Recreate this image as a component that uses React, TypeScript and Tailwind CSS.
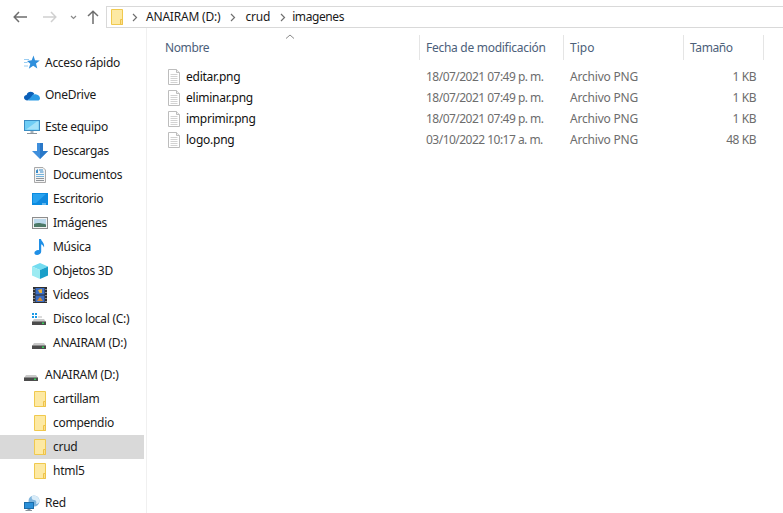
import React from "react";

const FolderIcon = () => (
  <svg width="14" height="18" viewBox="0 0 14 18" className="shrink-0">
    <path d="M1.5 1.5H12.5V16.5H1.5Z" fill="#fde9a3" stroke="#f0c94e" />
    <path d="M10.5 11.5H12.5V16.5H10.5Z" fill="#fbe08a" stroke="#eec24a" />
  </svg>
);

const FileIcon = () => (
  <svg width="14" height="16" viewBox="0 0 14 16" className="shrink-0">
    <path d="M1.5 .5H9.5L12.5 3.5V15.5H1.5Z" fill="#fff" stroke="#bdbdbd" />
    <path d="M9.5 .5V3.5H12.5" fill="#eee" stroke="#bdbdbd" />
    <path d="M3.5 5.5H10.5M3.5 7.5H10.5M3.5 9.5H10.5M3.5 11.5H10.5M3.5 13.5H10.5" stroke="#d2d2d2" />
  </svg>
);

const StarIcon = () => (
  <svg width="16" height="16" viewBox="0 0 16 16">
    <path d="M9.5 .5 11 5.2 15.8 5.4 12 8.4 13.3 13.5 9.2 10.7 4.8 13.8 6.3 8.8 3 6 7.7 5.3Z" fill="#2f8fdc" />
    <path d="M0 4.5H5M0 7.5H3.5M0 11H4" stroke="#9acdf2" />
  </svg>
);

const CloudIcon = () => (
  <svg width="16" height="16" viewBox="0 0 16 16">
    <path d="M3.5 13.5C1.3 13.5 0 12.2 0 10.6 0 9 1.2 8 2.6 7.9 3.1 5.9 4.8 4.7 6.7 4.7 8.3 4.7 9.6 5.5 10.3 6.8L7 11Z" fill="#0a5fb8" />
    <path d="M4 13.5 7.4 9.4C8.4 7.7 10 6.9 11.6 7.3 13.9 7.5 16 9 16 11.2 16 12.6 15 13.5 13.5 13.5Z" fill="#2a9be6" />
  </svg>
);

const PcIcon = () => (
  <svg width="16" height="16" viewBox="0 0 16 16">
    <rect x=".5" y="1.5" width="15" height="10" fill="#6ecdf5" stroke="#3b8ec4" />
    <path d="M2 10.5 13 2.5H14.5V10.5Z" fill="#a3e2f9" />
    <path d="M6.5 12H9.5V14H6.5Z" fill="#a8b2ba" />
    <path d="M3 14.5H13" stroke="#8a949c" />
  </svg>
);

const DownloadIcon = () => (
  <svg width="16" height="16" viewBox="0 0 16 16">
    <path d="M5 0H11V8H16L8 16 0 8H5Z" fill="#3f8fdc" />
    <path d="M8 0H11V8H16L8 16Z" fill="#2a78c8" />
  </svg>
);

const DocsIcon = () => (
  <svg width="16" height="16" viewBox="0 0 16 16">
    <path d="M2.5 .5H11L13.5 3V15.5H2.5Z" fill="#f4f4f4" stroke="#a9a9a9" />
    <path d="M7 3H11M8 5H11.5" stroke="#3a8cc9" />
    <path d="M4 3.5 6 2V6H4Z" fill="#3a8cc9" />
    <path d="M4 7.5H12M4 9.5H12" stroke="#73b3dd" />
    <path d="M4 11.5H12M4 13.5H12" stroke="#8f9499" />
  </svg>
);

const DesktopIcon = () => (
  <svg width="16" height="16" viewBox="0 0 16 16">
    <rect x="0" y="2" width="16" height="12" fill="#0a8be0" />
    <rect x="1" y="3" width="14" height="9" fill="#2aa3ef" />
    <path d="M4 12 14 3H15V12Z" fill="#1189de" />
    <path d="M10 13H14" stroke="#bfe3fb" />
  </svg>
);

const PicturesIcon = () => (
  <svg width="16" height="16" viewBox="0 0 16 16">
    <rect x=".5" y="2.5" width="15" height="11" fill="#f3f3f3" stroke="#8d8d8d" />
    <rect x="2" y="4" width="12" height="8" fill="#bcd9ec" />
    <path d="M2 9C5 7.5 9 8 14 9.5V12H2Z" fill="#4d7a68" />
  </svg>
);

const MusicIcon = () => (
  <svg width="16" height="16" viewBox="0 0 16 16">
    <path d="M7 0H9C9.3 2.5 13 4 12 8.5 11.6 6.8 10.4 5.7 9.2 5.2V12.5C9.2 14.5 7 16 5 16 3.4 16 2.4 15.1 2.4 14 2.4 12.4 4.4 11 6 11 6.4 11 6.7 11 7 11.2Z" fill="#1f8fe6" />
  </svg>
);

const CubeIcon = () => (
  <svg width="16" height="16" viewBox="0 0 16 16">
    <path d="M8 0 16 3.5 8 7 0 3.5Z" fill="#73dcf0" />
    <path d="M0 3.5 8 7V16L0 12.5Z" fill="#9cebf2" />
    <path d="M16 3.5 8 7V16L16 12.5Z" fill="#1a9fc9" />
  </svg>
);

const VideoIcon = () => (
  <svg width="16" height="16" viewBox="0 0 16 16">
    <rect x="1" y="0" width="14" height="16" fill="#2f2f2f" />
    <rect x="3.5" y="1" width="9" height="6.5" fill="#3b6ec4" />
    <rect x="3.5" y="8.5" width="9" height="6.5" fill="#3b6ec4" />
    <path d="M6 3 10 2V6H7.5Z" fill="#e8b23a" />
    <path d="M5 14 8 10 11 14Z" fill="#d88a2e" />
    <path d="M2 2V3M2 5V6M2 8V9M2 11V12M2 14V15M14 2V3M14 5V6M14 8V9M14 11V12M14 14V15" stroke="#e6e6e6" />
  </svg>
);

const Drive = ({ win }: { win?: boolean }) => (
  <svg width="16" height="16" viewBox="0 0 16 16">
    {win && <path d="M0 2H2V4H0ZM3 2H5V4H3ZM0 5H2V7H0ZM3 5H5V7H3Z" fill="#1d9be6" />}
    {win && <path d="M6 6H10" stroke="#b9b9b9" />}
    <path d="M2 8H12L14 11H0Z" fill="#c9c9c9" />
    <rect x="0" y="10.5" width="14" height="3.5" fill="#4c4c4c" />
    <rect x="10" y="11.5" width="2" height="1.5" fill="#34d058" />
  </svg>
);

const NetIcon = () => (
  <svg width="16" height="16" viewBox="0 0 16 16">
    <circle cx="10" cy="6" r="5.5" fill="#7fb4dc" />
    <path d="M8 1C7 3 8 5 10 5 12 5 13 7 12 9 14 9 15.5 7.5 15.5 6 15.5 3 13 .5 10 .5Z" fill="#d9ecf8" />
    <rect x="0.5" y="7.5" width="9" height="6" fill="#2a8fd8" stroke="#1b6ca8" />
    <path d="M3.5 14.5H6.5M1.5 15.5H8" stroke="#8a949c" />
  </svg>
);

const NavRow = ({ icon, label, indent, active }: { icon: React.ReactNode; label: string; indent?: boolean; active?: boolean }) => (
  <div className={`flex h-6 items-center w-[144px] ${active ? "bg-[#d9d9d9]" : ""} ${indent ? "pl-[32px]" : "pl-[24px]"}`}>
    <span className="w-4 h-4 flex items-center justify-center shrink-0">{icon}</span>
    <span className="whitespace-nowrap ml-[5px] tracking-[-0.28px]">{label}</span>
  </div>
);

const files = [
  ["editar.png", "18/07/2021 07:49 p. m.", "1 KB"],
  ["eliminar.png", "18/07/2021 07:49 p. m.", "1 KB"],
  ["imprimir.png", "18/07/2021 07:49 p. m.", "1 KB"],
  ["logo.png", "03/10/2022 10:17 a. m.", "48 KB"],
];

const Sep = () => <div className="w-px h-[25px] bg-[#e5e5e5] shrink-0" />;

const Chevron = () => (
  <svg width="6" height="9" viewBox="0 0 6 9" className="shrink-0">
    <path d="M1 1 4.5 4.5 1 8" fill="none" stroke="#6f6f6f" strokeWidth="1.2" />
  </svg>
);

export default function App() {
  return (
    <div className="w-[783px] h-[513px] overflow-hidden bg-white text-[12px] text-[#1a1a1a] flex flex-col" style={{ fontFamily: '"Noto Sans", sans-serif' }}>
      <div className="flex h-[22px] mt-[6px] shrink-0 items-center">
        <div className="w-[106px] flex items-center shrink-0 pl-[13px]">
          <svg width="14" height="12" viewBox="0 0 14 12">
            <path d="M6 1 1.2 6 6 11M1.2 6H14" fill="none" stroke="#6e6e6e" strokeWidth="1.5" />
          </svg>
          <svg width="14" height="12" viewBox="0 0 14 12" className="ml-[16px]">
            <path d="M8 1 12.8 6 8 11M12.8 6H0" fill="none" stroke="#d0d0d0" strokeWidth="1.5" />
          </svg>
          <svg width="7" height="5" viewBox="0 0 7 5" className="ml-[13px]">
            <path d="M1 1 3.5 3.5 6 1" fill="none" stroke="#8a8a8a" strokeWidth="1.2" />
          </svg>
          <svg width="12" height="14" viewBox="0 0 12 14" className="ml-[10px]">
            <path d="M1 6 6 1.2 11 6M6 1.2V14" fill="none" stroke="#6e6e6e" strokeWidth="1.5" />
          </svg>
        </div>
        <div className="flex-1 h-[22px] border border-r-0 border-[#d9d9d9] flex items-center pl-[3px] text-[#1a1a1a] tracking-[-0.2px]">
          <FolderIcon />
          <span className="ml-[8px]"><Chevron /></span>
          <span className="ml-[8px]">ANAIRAM (D:)</span>
          <span className="ml-[10px]"><Chevron /></span>
          <span className="ml-[9px]">crud</span>
          <span className="ml-[10px]"><Chevron /></span>
          <span className="ml-[6px] tracking-[-0.4px]">imagenes</span>
        </div>
      </div>

      <div className="flex flex-1 min-h-0">
        <div className="w-[147px] shrink-0 border-r border-[#f0f0f0] pt-[23px] flex flex-col gap-2">
          <div><NavRow icon={<StarIcon />} label="Acceso rápido" /></div>
          <div><NavRow icon={<CloudIcon />} label="OneDrive" /></div>
          <div>
            <NavRow icon={<PcIcon />} label="Este equipo" />
            <NavRow indent icon={<DownloadIcon />} label="Descargas" />
            <NavRow indent icon={<DocsIcon />} label="Documentos" />
            <NavRow indent icon={<DesktopIcon />} label="Escritorio" />
            <NavRow indent icon={<PicturesIcon />} label="Imágenes" />
            <NavRow indent icon={<MusicIcon />} label="Música" />
            <NavRow indent icon={<CubeIcon />} label="Objetos 3D" />
            <NavRow indent icon={<VideoIcon />} label="Videos" />
            <NavRow indent icon={<Drive win />} label="Disco local (C:)" />
            <NavRow indent icon={<Drive />} label="ANAIRAM (D:)" />
          </div>
          <div>
            <NavRow icon={<Drive />} label="ANAIRAM (D:)" />
            <NavRow indent icon={<FolderIcon />} label="cartillam" />
            <NavRow indent icon={<FolderIcon />} label="compendio" />
            <NavRow indent active icon={<FolderIcon />} label="crud" />
            <NavRow indent icon={<FolderIcon />} label="html5" />
          </div>
          <div><NavRow icon={<NetIcon />} label="Red" /></div>
        </div>

        <div className="flex-1 min-w-0">
          <div className="flex h-[25px] mt-[7px] text-[#4c607a] items-center relative">
            <svg width="10" height="5" viewBox="0 0 10 5" className="absolute left-[138px] -top-px">
              <path d="M1 4.5 5 1 9 4.5" fill="none" stroke="#8a8a8a" />
            </svg>
            <div className="w-[272px] pl-[18px] shrink-0 tracking-[-0.4px]">Nombre</div>
            <Sep />
            <div className="w-[143px] pl-[6px] shrink-0 whitespace-nowrap tracking-[-0.28px]">Fecha de modificación</div>
            <Sep />
            <div className="w-[119px] pl-[6px] shrink-0">Tipo</div>
            <Sep />
            <div className="w-[79px] pl-[6px] shrink-0 tracking-[-0.4px]">Tamaño</div>
            <Sep />
          </div>
          <div className="mt-[6px]">
            {files.map(([name, date, size]) => (
              <div key={name} className="flex h-[21px] items-center whitespace-nowrap">
                <div className="w-[273px] pl-[20px] shrink-0 flex items-center">
                  <FileIcon />
                  <span className="ml-[5px] text-[#111] tracking-[-0.24px]">{name}</span>
                </div>
                <div className="w-[144px] pl-[6px] shrink-0 text-[#6d6d6d] tracking-[-0.52px]">{date}</div>
                <div className="w-[120px] pl-[6px] shrink-0 text-[#6d6d6d] tracking-[-0.2px]">Archivo PNG</div>
                <div className="w-[72px] shrink-0 text-right text-[#6d6d6d] tracking-[-0.45px]">{size}</div>
              </div>
            ))}
          </div>
        </div>
      </div>
    </div>
  );
}
